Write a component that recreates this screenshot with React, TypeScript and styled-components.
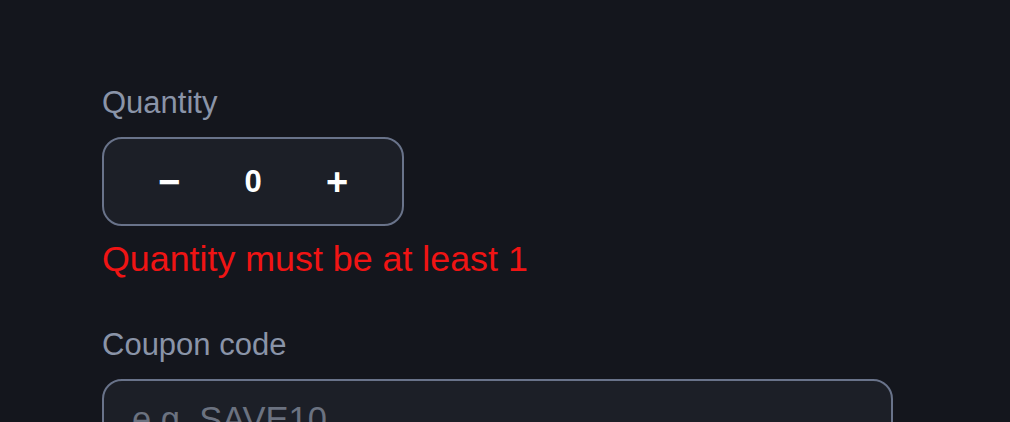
import React, { useState } from 'react';
import styled, { createGlobalStyle } from 'styled-components';

const GlobalStyle = createGlobalStyle`
  html, body {
    margin: 0;
    padding: 0;
    background: #14161d;
  }
  body {
    font-family: 'Liberation Sans', Arial, sans-serif;
  }
`;

const Page = styled.div`
  background: #14161d;
  padding: 85px 0 0 102px;
  box-sizing: border-box;
  overflow: hidden;
  height: 422px;
`;

const Field = styled.div<{ $gapAfter?: number }>`
  display: flex;
  flex-direction: column;
  align-items: flex-start;
  margin-bottom: ${p => p.$gapAfter ?? 0}px;
`;

const Label = styled.label`
  color: #8a94a8;
  font-size: 31px;
  line-height: 36px;
  margin-bottom: 16px;
`;

const Stepper = styled.div`
  display: flex;
  align-items: center;
  justify-content: center;
  width: 302px;
  height: 89px;
  box-sizing: border-box;
  background: #1c1f27;
  border: 2px solid #69738a;
  border-radius: 20px;
`;

const StepButton = styled.button`
  width: 84px;
  height: 100%;
  background: transparent;
  border: none;
  color: #ffffff;
  font-family: 'Liberation Sans', Arial, sans-serif;
  font-weight: 700;
  font-size: 38px;
  line-height: 1;
  cursor: pointer;
  padding: 0;
`;

const Value = styled.span`
  width: 84px;
  text-align: center;
  color: #ffffff;
  font-weight: 700;
  font-size: 31px;
`;

const ErrorText = styled.div`
  margin-top: 12px;
  color: #f01414;
  font-size: 35.8px;
  line-height: 42px;
`;

const TextInput = styled.input`
  width: 791px;
  box-sizing: border-box;
  padding: 17px 28px;
  background: #1c1f27;
  border: 2px solid #69738a;
  border-radius: 20px;
  color: #ffffff;
  font-family: 'Liberation Sans', Arial, sans-serif;
  font-size: 34.5px;
  line-height: 42px;
  outline: none;

  &::placeholder {
    color: #6b7280;
  }
`;

export default function App() {
  const [qty, setQty] = useState(0);
  const [coupon, setCoupon] = useState('');

  return (
    <>
      <GlobalStyle />
      <Page>
        <Field $gapAfter={47}>
          <Label>Quantity</Label>
          <Stepper>
            <StepButton onClick={() => setQty(q => Math.max(0, q - 1))}>−</StepButton>
            <Value>{qty}</Value>
            <StepButton onClick={() => setQty(q => q + 1)}>+</StepButton>
          </Stepper>
          {qty < 1 && <ErrorText>Quantity must be at least 1</ErrorText>}
        </Field>
        <Field>
          <Label>Coupon code</Label>
          <TextInput
            value={coupon}
            onChange={e => setCoupon(e.target.value)}
            placeholder="e.g. SAVE10"
          />
        </Field>
      </Page>
    </>
  );
}
